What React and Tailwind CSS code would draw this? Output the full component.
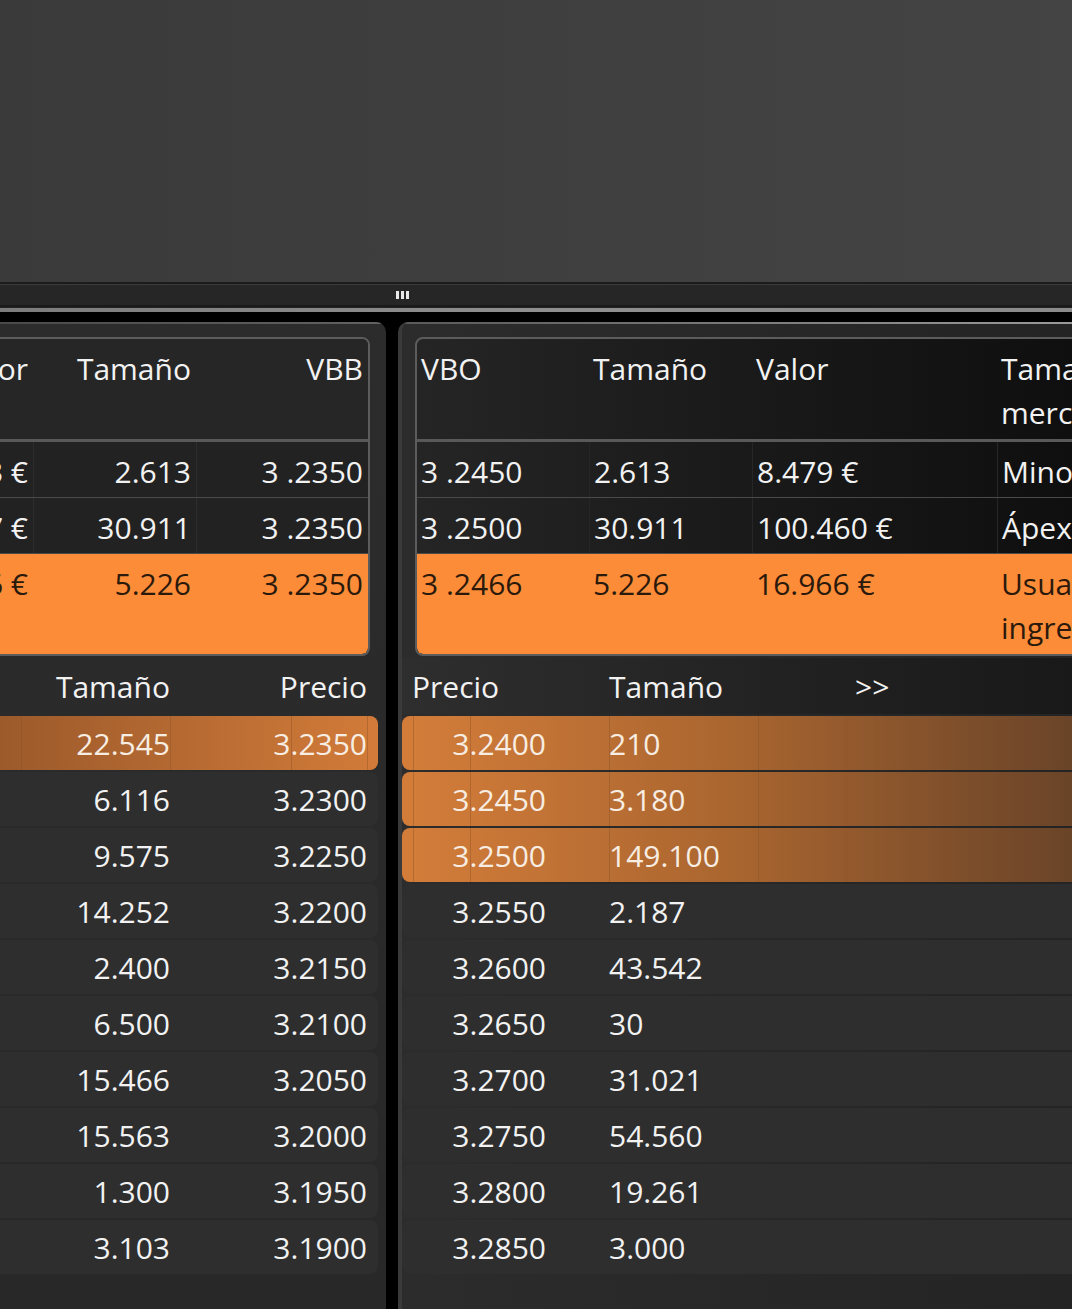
import React from "react";

const leftTop = [
  ["Minorista", "8.453 €", "2.613", "3 .2350"],
  ["Ápex", "99.997 €", "30.911", "3 .2350"],
  ["Usuario ingresado", "16.906 €", "5.226", "3 .2350"],
];
const rightTop = [
  ["3 .2450", "2.613", "8.479 €", "Minorista"],
  ["3 .2500", "30.911", "100.460 €", "Ápex"],
  ["3 .2466", "5.226", "16.966 €", "Usuario ingresado"],
];
const bids = [
  ["22.545", "3.2350"],
  ["6.116", "3.2300"],
  ["9.575", "3.2250"],
  ["14.252", "3.2200"],
  ["2.400", "3.2150"],
  ["6.500", "3.2100"],
  ["15.466", "3.2050"],
  ["15.563", "3.2000"],
  ["1.300", "3.1950"],
  ["3.103", "3.1900"],
];
const asks = [
  ["3.2400", "210"],
  ["3.2450", "3.180"],
  ["3.2500", "149.100"],
  ["3.2550", "2.187"],
  ["3.2600", "43.542"],
  ["3.2650", "30"],
  ["3.2700", "31.021"],
  ["3.2750", "54.560"],
  ["3.2800", "19.261"],
  ["3.2850", "3.000"],
];

function LeftBox() {
  const cols = "grid grid-cols-[200px_245px_163px_172px]";
  const heads = ["Tamaño mercado", "Valor", "Tamaño", "VBB"];
  return (
    <div className="w-[784px] shrink-0 border-2 border-[#5c5c5c] rounded-[8px] overflow-hidden bg-[#222222]">
      <div className={`${cols} h-[103px] bg-[#262626] border-b-[3px] border-[#595959]`}>
        {heads.map((h, i) => (
          <div key={i} className="pt-[8px] pr-[5px] text-right leading-[44px]">{h}</div>
        ))}
      </div>
      {leftTop.map((r, ri) => {
        const orange = ri === 2;
        return (
          <div
            key={ri}
            className={`${cols} ${orange ? "h-[100px] bg-[#fd8c38] text-[#2b1a0c] rounded-b-[6px]" : "h-[56px] border-b border-[#4a4a4a]"}`}
          >
            {r.map((c, ci) => (
              <div
                key={ci}
                className={`pt-[8px] pr-[5px] text-right leading-[44px] ${ci > 0 && !orange ? "border-l border-[#2d2d2d]" : ""}`}
              >
                {c}
              </div>
            ))}
          </div>
        );
      })}
    </div>
  );
}

function RightBox() {
  const cols = "grid grid-cols-[172px_163px_245px_200px]";
  const heads = ["VBO", "Tamaño", "Valor", "Tamaño mercado"];
  return (
    <div className="w-[784px] shrink-0 border-2 border-[#5c5c5c] rounded-[8px] overflow-hidden bg-gradient-to-r from-[#252525] to-[#0b0b0b]">
      <div className={`${cols} h-[103px] border-b-[3px] border-[#595959]`}>
        {heads.map((h, i) => (
          <div key={i} className="pt-[8px] pl-[4px] leading-[44px]">{h}</div>
        ))}
      </div>
      {rightTop.map((r, ri) => {
        const orange = ri === 2;
        return (
          <div
            key={ri}
            className={`${cols} ${orange ? "h-[100px] bg-[#fd8c38] text-[#2b1a0c] rounded-b-[6px]" : "h-[56px] border-b border-[#4a4a4a]"}`}
          >
            {r.map((c, ci) => (
              <div
                key={ci}
                className={`pt-[8px] pl-[4px] leading-[44px] ${ci > 0 && !orange ? "border-l border-[#262626]" : ""}`}
              >
                {c}
              </div>
            ))}
          </div>
        );
      })}
    </div>
  );
}

function Line({ cls }) {
  return <div className={`absolute top-0 bottom-0 w-px bg-[#8a4f22]/40 ${cls}`} />;
}

export default function App() {
  return (
    <div className="w-[1072px] h-[1309px] overflow-hidden bg-black flex flex-col font-['Open_Sans',sans-serif] text-[30px] text-[#f2f2f2]">
      <div className="h-[282px] shrink-0 bg-gradient-to-r from-[#3a3a3a] to-[#444444]" />
      <div className="h-[2px] shrink-0 bg-[#1b1b1b]" />
      <div className="h-[23px] shrink-0 bg-[#262626] border-t border-[#3a3a3a] border-b-2 border-b-[#1a1a1a] flex items-center">
        <div className="ml-[396px] flex gap-[2px]">
          <span className="w-[3px] h-[8px] bg-[#e8e8e8]" />
          <span className="w-[3px] h-[8px] bg-[#e8e8e8]" />
          <span className="w-[3px] h-[8px] bg-[#e8e8e8]" />
        </div>
      </div>
      <div className="h-px shrink-0 bg-[#222222]" />
      <div className="h-[4px] shrink-0 bg-gradient-to-r from-[#7c7c7c] via-[#8f8f8f] to-[#8a8a8a]" />
      <div className="h-[10px] shrink-0 bg-black" />

      <div className="flex-1 min-h-0 flex gap-[12px]">
        {/* Left panel */}
        <div className="w-[386px] shrink-0 rounded-tr-[10px] overflow-hidden bg-gradient-to-b from-[#2c2c2c] to-[#282828] flex flex-col">
          <div className="h-[2px] shrink-0 bg-gradient-to-r from-[#4a4a4a] to-[#626262]" />
          <div className="flex justify-end pr-[16px] pt-[13px]">
            <LeftBox />
          </div>
          <div className="mt-[2px] h-[56px] shrink-0 flex items-center justify-end">
            <div className="w-[150px] text-right pr-px">Tamaño</div>
            <div className="w-[207px] text-right pr-[11px] mr-[8px]">Precio</div>
          </div>
          <div className="mt-[2px] flex flex-col gap-[2px] pr-[8px]">
            {bids.map((b, i) => {
              const orange = i === 0;
              return (
                <div
                  key={i}
                  className={`relative h-[54px] rounded-r-[8px] flex items-center justify-end ${orange ? "bg-gradient-to-r from-[#9c5a2b] to-[#d27b39] text-[#f7ede2]" : "bg-[#2e2e2e]"}`}
                >
                  {orange && (
                    <>
                      <Line cls="right-[356px]" />
                      <Line cls="right-[207px]" />
                      <Line cls="right-[86px]" />
                      <Line cls="right-[10px]" />
                    </>
                  )}
                  <div className="relative w-[150px] text-right pr-px">{b[0]}</div>
                  <div className="relative w-[207px] text-right pr-[11px]">{b[1]}</div>
                </div>
              );
            })}
          </div>
        </div>

        {/* Right panel */}
        <div className="flex-1 rounded-tl-[10px] overflow-hidden border-l-4 border-[#3a3a3a] bg-gradient-to-r from-[#2c2c2c] to-[#242424] flex flex-col">
          <div className="h-[2px] shrink-0 bg-gradient-to-r from-[#5a5a5a] via-[#7a7a7a] to-[#9a9a9a]" />
          <div className="flex pl-[13px] pt-[13px]">
            <RightBox />
          </div>
          <div className="mt-[2px] h-[56px] shrink-0 flex items-center pl-[10px] bg-gradient-to-r from-[#2e2e2e] to-[#191919]">
            <div className="w-[197px]">Precio</div>
            <div className="w-[246px]">Tamaño</div>
            <div>&gt;&gt;</div>
          </div>
          <div className="mt-[2px] flex flex-col gap-[2px]">
            {asks.map((a, i) => {
              const orange = i < 3;
              return (
                <div
                  key={i}
                  className={`relative h-[54px] rounded-l-[8px] flex items-center ${orange ? "bg-gradient-to-r from-[#d47d3a] via-[#a9652f] to-[#6a4428] text-[#f7ede2]" : "bg-[#2e2e2e]"}`}
                >
                  {orange && (
                    <>
                      <Line cls="left-[11px]" />
                      <Line cls="left-[68px]" />
                      <Line cls="left-[207px]" />
                      <Line cls="left-[356px]" />
                      <Line cls="left-[444px]" />
                      <Line cls="left-[474px]" />
                    </>
                  )}
                  <div className="relative w-[144px] text-right">{a[0]}</div>
                  <div className="relative ml-[63px]">{a[1]}</div>
                </div>
              );
            })}
          </div>
        </div>
      </div>
    </div>
  );
}
